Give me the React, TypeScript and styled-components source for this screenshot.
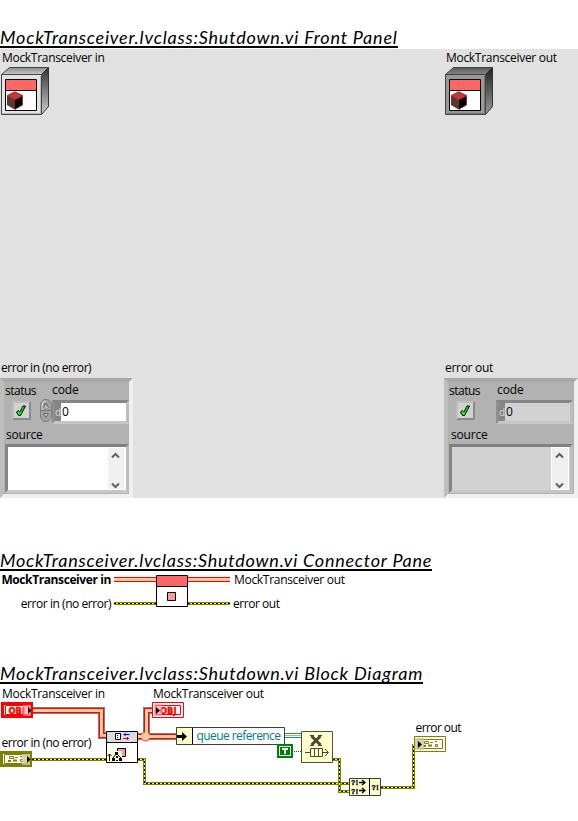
import React from "react";
import styled, { createGlobalStyle } from "styled-components";

const GlobalStyle = createGlobalStyle`
  body { margin: 0; background: #fff; color: #000; }
  svg { display: block; }
`;

const Page = styled.main`
  width: 578px;
  height: 821px;
  overflow: hidden;
  box-sizing: border-box;
  padding-top: 27px;
  font-family: "Open Sans", "Noto Sans", sans-serif;
  font-size: 12px;
`;

const Heading = styled.h2<{ $width: number; $track: number }>`
  margin: 0;
  box-sizing: border-box;
  width: ${(p) => p.$width}px;
  height: 21px;
  border-bottom: 2px solid #000;
  font: italic 400 18px/20px Lato, "Open Sans", sans-serif;
  letter-spacing: ${(p) => p.$track}px;
  white-space: nowrap;
`;

const Label = styled.span<{ $bold?: boolean; $track?: number }>`
  font-size: 12px;
  line-height: 16px;
  height: 16px;
  font-weight: ${(p) => (p.$bold ? 700 : 400)};
  letter-spacing: ${(p) => p.$track ?? -0.3}px;
  white-space: nowrap;
`;

const FrontPanel = styled.section`
  display: grid;
  grid-template-columns: 444px 134px;
  margin-top: 1px;
  height: 449px;
  margin-bottom: 52px;
  background: #e1e1e1;
`;

const PanelColumn = styled.div`
  display: flex;
  flex-direction: column;
  justify-content: space-between;
`;

const ObjectControl = styled.div`
  display: flex;
  flex-direction: column;
  padding: 1px 0 0 1px;
  gap: 1px;
  & > span { padding-left: 1px; }
`;

const ErrorControl = styled.div`
  display: flex;
  flex-direction: column;
  gap: 2px;
  & > span { padding-left: 1px; }
`;

const Cluster = styled.div<{ $width: number }>`
  box-sizing: border-box;
  width: ${(p) => p.$width}px;
  height: 120px;
  border: 4px solid;
  border-color: #a9a9a9 #efefef #efefef #bebebe;
  background: #b2b2b2;
  padding: 0 0 0 1px;
`;

const ClusterTop = styled.div<{ $cols: string }>`
  display: grid;
  grid-template-columns: ${(p) => p.$cols};
  height: 44px;
`;

const Field = styled.div`
  display: flex;
  flex-direction: column;
`;

const StatusButton = styled.div`
  box-sizing: border-box;
  width: 19px;
  height: 19px;
  margin: 2px 0 0 7px;
  border: 2px solid;
  border-color: #bdbdbd #8a8a8a #8a8a8a #bdbdbd;
  background: #d2d2d2;
`;

const StatusLabel = styled(Label)`
  padding-top: 1px;
`;

const SpinnerSlot = styled.div`
  padding-top: 17px;
`;

const CodeBox = styled.div<{ $off?: boolean }>`
  box-sizing: border-box;
  display: flex;
  width: 77px;
  height: 24px;
  margin-top: 2px;
  border: 3px solid;
  border-color: #858585 #bdbdbd #c6c6c6 #8e8e8e;
  background: ${(p) => (p.$off ? "#d2d2d2" : "#fff")};
  line-height: 18px;
`;

const Radix = styled.span`
  width: 6px;
  background: #858585;
  color: #d8d8d8;
  font-size: 10px;
`;

const CodeValue = styled.span`
  padding-left: 1px;
`;

const CodeLabel = styled(Label)<{ $pad: number }>`
  padding-left: ${(p) => p.$pad}px;
`;

const SourceLabel = styled(Label)<{ $indent: number }>`
  display: block;
  margin: 1px 0 1px ${(p) => p.$indent}px;
`;

const SourceBox = styled.div<{ $off?: boolean }>`
  box-sizing: border-box;
  display: flex;
  justify-content: flex-end;
  width: 124px;
  height: 49px;
  padding: 1px 2px 1px 0;
  border: 3px solid;
  border-color: #808080 #bdbdbd #c6c6c6 #858585;
  background: ${(p) => (p.$off ? "#d2d2d2" : "#fff")};
`;

const Scrollbar = styled.div<{ $off?: boolean }>`
  width: 16px;
  background: #f0f0f0;
  box-shadow: ${(p) => (p.$off ? "0 0 0 1px #fff" : "none")};
`;

const Connector = styled.section`
  display: grid;
  grid-template-columns: 111px 122px 1fr;
  margin-bottom: 53px;
  height: 39px;
`;

const Terminals = styled.div<{ $end?: boolean }>`
  display: flex;
  flex-direction: column;
  align-items: ${(p) => (p.$end ? "flex-end" : "flex-start")};
  gap: 8px;
  padding-top: 1px;
`;

const OutLabel = styled(Label)`
  padding-left: 1px;
`;

const INK = "#000";
const OLIVE = "#808000";

function ObjectBox({ dark }: { dark?: boolean }) {
  const face = dark ? "#999" : "#e3e3e3";
  const id = dark ? "dk" : "lt";
  return (
    <svg width="49" height="49" viewBox="0 0 49 49">
      <defs>
        <linearGradient id={id + "top"} x2="0" y2="1">
          <stop stopColor={dark ? "#555" : "#888"} />
          <stop offset="1" stopColor={dark ? "#888" : "#ccc"} />
        </linearGradient>
        <linearGradient id={id + "side"} x2="0" y2="1">
          <stop stopColor={dark ? "#222" : "#333"} />
          <stop offset="1" stopColor={dark ? "#999" : "#ccc"} />
        </linearGradient>
      </defs>
      <path d="M.5 7.500 8.500.5H47.500L40.500 7.500z" fill={`url(#${id}top)`} stroke="#444" />
      <path d="M40.500 7.500 47.500.5V39.500L40.500 47.500z" fill={`url(#${id}side)`} stroke="#333" />
      <path d="M.5 7.500H40.500V47.500H.5z" fill={face} stroke="#444" />
      <path d="M1.500 46.500H39.500V9" fill="none" stroke={dark ? "#777" : "#bbb"} />
      <path d="M4.500 12.500H35.500V43.500H4.500z" fill="#fff" stroke={INK} />
      <path d="M5 13h30v10H5z" fill="#f66" />
      <path d="M5 23.500h30" stroke={INK} />
      <path d="M6 28.500 13.500 24.500 22 28.500V38L13.500 42.500 6 38z" fill="#633" />
      <path d="M6.500 28.500 14 25 21.500 28.500 14 32.500z" fill="#c33" stroke="#b33" />
      <path d="M14 33 21 29.500V38L14 42z" fill={INK} />
      <path d="M14 42.500 21.500 38V29" fill="none" stroke="#a33" strokeDasharray="2 1" />
    </svg>
  );
}

function Check() {
  return (
    <svg width="15" height="15" viewBox="0 0 15 15">
      <path d="M2.500 9 4.500 7.500 6 9 9 3 11.500 3 6.500 12.500 4.500 12.500z" fill="#0f0" stroke={INK} />
    </svg>
  );
}

function Spinner() {
  return (
    <svg width="12" height="24" viewBox="0 0 12 24">
      <rect x=".5" y=".5" width="11" height="22" rx="5.500" fill="#a2a2a2" stroke="#7d7d7d" />
      <path d="M2 11V6a4 4 0 0 1 4-4" fill="none" stroke="#ddd" />
      <path d="M1 11.500h10" stroke="#777" />
      <path d="M3.500 8.500 6 4.500 8.500 8.500" fill="#ccc" stroke="#555" />
      <path d="M3.500 14.500h5L6 18.500z" fill="#ccc" stroke="#666" />
    </svg>
  );
}

function ErrorCluster({ off }: { off?: boolean }) {
  return (
    <Cluster $width={off ? 134 : 133}>
      <ClusterTop $cols={off ? "47px 77px" : "35px 12px 77px"}>
        <Field>
          <StatusLabel $track={-0.5}>status</StatusLabel>
          <StatusButton>
            <Check />
          </StatusButton>
        </Field>
        {!off && (
          <SpinnerSlot>
            <Spinner />
          </SpinnerSlot>
        )}
        <Field>
          <CodeLabel $pad={off ? 1 : 0} $track={-0.1}>code</CodeLabel>
          <CodeBox $off={off}>
            <Radix>d</Radix>
            <CodeValue>0</CodeValue>
          </CodeBox>
        </Field>
      </ClusterTop>
      <SourceLabel $track={-0.2} $indent={off ? 2 : 1}>source</SourceLabel>
      <SourceBox $off={off}>
        <Scrollbar $off={off}>
          <svg width="16" height="41" viewBox="0 1 16 41">
            <path d="M4 10.500 7.500 7 11 10.500M4 36.500 7.500 40 11 36.500" fill="none" stroke="#606060" strokeWidth="2" />
          </svg>
        </Scrollbar>
      </SourceBox>
    </Cluster>
  );
}

function ErrorWire({ d }: { d: string }) {
  return (
    <g fill="none">
      <path d={d} stroke={OLIVE} strokeWidth="3" />
      <path d={d} stroke="#ff0" strokeWidth="1" />
      <path d={d} stroke={INK} strokeWidth="1" strokeDasharray="2 2" />
    </g>
  );
}

function ClassWire({ d }: { d: string }) {
  return (
    <g fill="none">
      <path d={d} stroke="#808080" strokeWidth="7" />
      <path d={d} stroke="#f00" strokeWidth="5" />
      <path d={d} stroke="#fc9" strokeWidth="3" />
    </g>
  );
}

function ConnectorIcon() {
  return (
    <svg width="122" height="39" viewBox="111 571 122 39">
      {[114, 188].map((x) => (
        <g key={x}>
          <rect x={x} y="577" width="42" height="5" fill="#f00" />
          <rect x={x} y="578" width="42" height="3" fill="#fc9" />
          <ErrorWire d={`M${x} 603.500h42`} />
        </g>
      ))}
      <path d="M156.500 575.500h31v31h-31z" fill="#fff" stroke={INK} />
      <path d="M157 576h30v10h-30z" fill="#f66" />
      <path d="M157 586.500h30" stroke={INK} />
      <path d="M167.500 592.500h8v8h-8z" fill="#f99" stroke={INK} />
    </svg>
  );
}

function DiagramText({ x, y, w, children, fill = INK }: { x: number; y: number; w: number; children: string; fill?: string }) {
  return (
    <text x={x} y={y} textLength={w} fill={fill} fontSize="12">
      {children}
    </text>
  );
}

function ObjText({ x }: { x: number }) {
  return (
    <text x={x} y="713.500" fontSize="8.500" fontFamily='"DejaVu Sans", sans-serif' fontWeight="700" fill="#f00" stroke="#f00" strokeWidth=".4" textLength="16.500" lengthAdjust="spacingAndGlyphs">
      OBJ
    </text>
  );
}

function ErrorGlyph({ x, y }: { x: number; y: number }) {
  return (
    <g transform={`translate(${x} ${y})`} fill="none" stroke={OLIVE}>
      <path d="M2.500.5h4v2h-4zM13.500 3.500h2v2h-2zM8 1.500h3M13 .5h2" />
      <path d="M1 5h3M6 4.500h4" strokeWidth="2" />
    </g>
  );
}

function BlockDiagram() {
  return (
    <svg width="578" height="137" viewBox="0 684 578 137" fontFamily='"Open Sans", "Noto Sans", sans-serif'>
      <ClassWire d="M33 710.500H101.500V735.500H106" />
      <ClassWire d="M138 736.500H176" />
      <ClassWire d="M146.500 736.500V710.500H152" />
      <circle cx="145.500" cy="736.500" r="4.500" fill="#fc9" stroke="#f33" />
      <path d="M138 736.500H176M146.500 736V712" stroke="#fc9" strokeWidth="3" />
      <ErrorWire d="M32 759.500H106" />
      <ErrorWire d="M138 759.500H144.500V783.500H349" />
      <ErrorWire d="M333 759.500H339.500V791.500H349" />
      <ErrorWire d="M381 787.500H413.500V744" />

      <DiagramText x={2} y={698} w={103}>MockTransceiver in</DiagramText>
      <DiagramText x={153} y={698} w={111}>MockTransceiver out</DiagramText>
      <DiagramText x={1.5} y={747} w={90}>error in (no error)</DiagramText>
      <DiagramText x={415.5} y={732} w={46}>error out</DiagramText>

      {/* class control terminal */}
      <path d="M2.500 703.500h29v13h-29z" fill="#fff" stroke="#f00" strokeWidth="3" />
      <path d="M5.500 705.500h23v9h-23z" fill="#fff" stroke="#f00" />
      <ObjText x={8.5} />
      <path d="M23 705h8v11h-8z" fill="#f99" fillOpacity=".6" />
      <path d="M28 707v7l3.500-3.500z" fill={INK} />

      {/* class indicator terminal */}
      <path d="M152.500 702.500h31v15h-31z" fill="#fff" stroke="#f00" />
      <path d="M155.500 705.500h25v9h-25z" fill="#fff" stroke="#f00" />
      <ObjText x={160} />
      <path d="M154 704h8v12h-8z" fill="#f99" fillOpacity=".6" />
      <path d="M156 707v7l4-3.500z" fill={INK} />

      {/* error control terminal */}
      <path d="M1.500 752.500h29v13h-29z" fill="#fff" stroke={OLIVE} strokeWidth="3" />
      <path d="M4.500 754.500h23v9h-23z" fill="#fff" stroke={OLIVE} />
      <ErrorGlyph x={7} y={756} />
      <path d="M22 754h8v11h-8z" fill="#cccc99" fillOpacity=".8" />
      <path d="M27 756v7l3.500-3.500z" fill={INK} />

      {/* error indicator terminal */}
      <path d="M414.500 736.500h31v15h-31z" fill="#fff" stroke={OLIVE} />
      <path d="M417.500 739.500h25v9h-25z" fill="#fff" stroke={OLIVE} />
      <ErrorGlyph x={422} y={741} />
      <path d="M415 738h9v12h-9z" fill="#cccc99" fillOpacity=".8" />
      <path d="M418 741v7l4-3.500z" fill={INK} />

      {/* subVI */}
      <path d="M106.500 731.500h31v31h-31z" fill="#fff" stroke={INK} />
      <path d="M107 732h30v10h-30z" fill="#dcdcdc" />
      <path d="M107 742.500h30" stroke={INK} />
      <path d="M115.500 733.500h5v6h-5z" fill="#fff" stroke={INK} />
      <path d="M117 735.500h2M117 737.500h2" stroke={INK} strokeDasharray="1 1" />
      <path d="M123.500 734.500h6M125 733v3" stroke="#00f" />
      <path d="M123 738.500h6M127.500 737v3" stroke="#c03" />
      <path d="M117.500 748.500h8v8h-8z" fill="#f99" stroke={INK} />
      <path d="M107 751h15v11h-15z" fill="#ffc" />
      <path d="M109.500 761v-7M107.500 756l2-2 2 2M116 754l-3 4M117 754l4 4" fill="none" stroke={INK} />
      <path d="M115 752h3v3h-3zM112 758h3v3h-3zM119 758h3v3h-3zM116 756h2v2h-2zM116 760h2v1h-2z" fill={INK} />

      {/* unbundle by name */}
      <path d="M176.500 727.500h108v17h-108z" fill="#fff" stroke="#404030" />
      <path d="M177 728h15v16h-15z" fill="#ffc" />
      <path d="M192.500 728v16" stroke={INK} />
      <path d="M177 735h5v-3l5 4.500-5 4.500v-3h-5z" fill={INK} />
      <DiagramText x={196.5} y={740} w={84.5} fill="#008080">queue reference</DiagramText>

      {/* queue refnum wire and boolean constant */}
      <path d="M285 733.500h16M285 737.500h16" stroke="#099" />
      <path d="M285 735.500h16" stroke="#f93" />
      <path d="M277 744h16v14h-16z" fill="#008000" />
      <path d="M279.500 746.500h11v9h-11z" fill="none" stroke="#fff" />
      <path d="M282 749h6M285 748v6" stroke="#fff" strokeWidth="2" />
      <path d="M294 751.500h7" stroke="#008000" strokeDasharray="1 1" />

      {/* release queue */}
      <path d="M301.500 731.500h31v31h-31z" fill="#ffc" stroke="#505040" />
      <path d="M311.500 736l9 9M320.500 736l-9 9" stroke="#4a4a3c" strokeWidth="3" />
      <path d="M310 735.500h4M318 735.500h4M310 745.500h4M318 745.500h4" stroke="#4a4a3c" />
      <path d="M305 752.500h5M310.500 748.500h12v8h-12zM314.500 749v7M318.500 749v7M323 752.500h5M325 749l3.500 3.500-3.500 3.500" fill="none" stroke="#4a4a3c" />

      {/* merge errors */}
      <path d="M349.500 778.500h31v17h-31z" fill="#ffc" stroke="#404030" />
      <path d="M369.500 779v16" stroke={INK} />
      <g fontSize="7" fontWeight="800" fontFamily='"Liberation Sans", sans-serif' stroke={INK} strokeWidth=".3">
        <text x="351" y="785" textLength="7">?!</text>
        <text x="351" y="793.500" textLength="7">?!</text>
        <text x="371.500" y="789.500" textLength="7">?!</text>
      </g>
      <path d="M359 782.500h6M362 780l3 2.500-3 2.500M359 790.500h6M362 788l3 2.500-3 2.500" fill="none" stroke={INK} strokeWidth="1.300" />
    </svg>
  );
}

export default function App() {
  return (
    <Page>
      <GlobalStyle />
      <Heading $width={398} $track={0.79}>MockTransceiver.lvclass:Shutdown.vi Front Panel</Heading>
      <FrontPanel>
        {[false, true].map((out) => (
          <PanelColumn key={String(out)}>
            <ObjectControl>
              <Label>{out ? "MockTransceiver out" : "MockTransceiver in"}</Label>
              <ObjectBox dark={out} />
            </ObjectControl>
            <ErrorControl>
              <Label $track={out ? -0.3 : -0.45}>{out ? "error out" : "error in (no error)"}</Label>
              <ErrorCluster off={out} />
            </ErrorControl>
          </PanelColumn>
        ))}
      </FrontPanel>

      <Heading $width={432} $track={0.76}>MockTransceiver.lvclass:Shutdown.vi Connector Pane</Heading>
      <Connector>
        <Terminals $end>
          <Label $bold $track={-0.4}>MockTransceiver in</Label>
          <Label $track={-0.45}>error in (no error)</Label>
        </Terminals>
        <ConnectorIcon />
        <Terminals>
          <OutLabel>MockTransceiver out</OutLabel>
          <Label $track={-0.45}>error out</Label>
        </Terminals>
      </Connector>

      <Heading $width={423} $track={0.79}>MockTransceiver.lvclass:Shutdown.vi Block Diagram</Heading>
      <BlockDiagram />
    </Page>
  );
}
